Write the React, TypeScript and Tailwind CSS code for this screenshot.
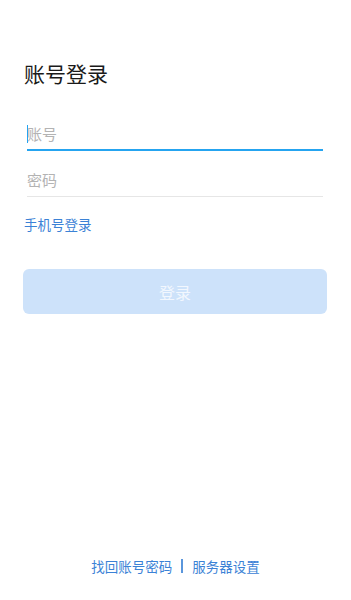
import React from "react";

const font = { fontFamily: '"Noto Sans CJK SC", "Noto Sans", sans-serif' };

export default function App() {
  return (
    <div className="w-[351px] h-[600px] bg-white flex flex-col" style={font}>
      <div className="px-6 pt-[58px]">
        <h1 className="text-[21px] leading-[30px] text-[#1a1a1a] font-normal">账号登录</h1>
      </div>
      <div className="pl-[27px] pr-[28px] mt-[29px] flex flex-col">
        <div className="h-[34px] flex items-center border-b-2 border-[#25a4f0] relative">
          <span className="absolute left-0 top-[8px] w-px h-[18px] bg-[#25a4f0]" />
          <span className="text-[15px] text-[#b3b3b3] leading-none">账号</span>
        </div>
        <div className="h-[35px] mt-[11px] flex items-center border-b border-[#e6e6e6]">
          <span className="text-[15px] text-[#b3b3b3] leading-none">密码</span>
        </div>
      </div>
      <div className="px-6 mt-[14px]">
        <span className="text-[13.5px] text-[#3b82d6] leading-[20px]">手机号登录</span>
      </div>
      <div className="px-[23px] mt-[34px]">
        <div className="h-[45px] w-[304px] rounded-[6px] bg-[#cde2fa] flex items-center justify-center">
          <span className="text-[16px] text-[#f2f7fe]">登录</span>
        </div>
      </div>
      <div className="flex-1" />
      <div className="flex items-center justify-center gap-[9px] pb-[24px] text-[13.5px] text-[#3b82d6] leading-[20px]">
        <span>找回账号密码</span>
        <span className="w-[2px] h-[14px] bg-[#5a96dc]" />
        <span>服务器设置</span>
      </div>
    </div>
  );
}
